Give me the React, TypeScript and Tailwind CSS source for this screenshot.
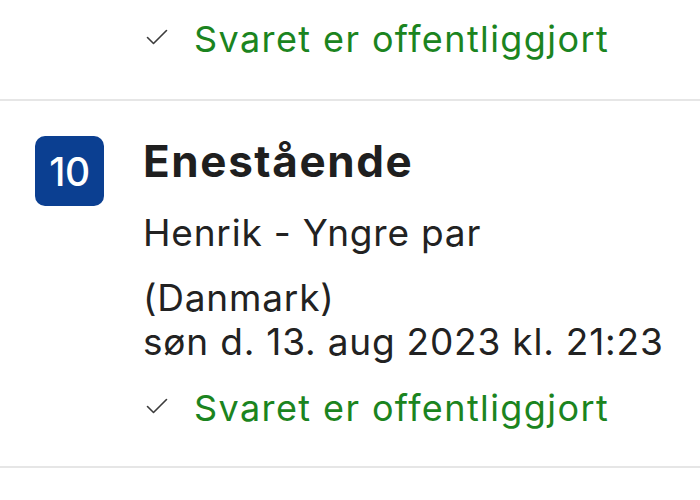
function Published() {
  return (
    <div className="flex items-start">
      <svg width="22" height="16" viewBox="0 0 22 16" fill="none" className="mt-[8px] shrink-0">
        <polyline points="1.5,8.5 7.5,14.5 20.5,1.5" stroke="#3c3c3c" strokeWidth="1.6" strokeLinecap="round" strokeLinejoin="round" />
      </svg>
      <span className="ml-[26px] text-[36px] leading-none text-[#1b8420] tracking-[1.4px] whitespace-nowrap">
        Svaret er offentliggjort
      </span>
    </div>
  );
}

export default function App() {
  return (
    <div className="w-[700px] h-[500px] overflow-hidden bg-white font-['Inter',sans-serif] text-[#222]">
      <div className="pl-[146px] pt-[21px] h-[99px]">
        <Published />
      </div>
      <div className="h-[2px] bg-[#e6e6e6]" />
      <div className="flex pl-[35px] pt-[35px] h-[365px]">
        <div className="w-[69px] h-[70px] rounded-[10px] bg-[#0b3f91] flex items-center justify-center shrink-0">
          <span className="text-white text-[39px] font-medium tracking-[-0.5px] leading-none">10</span>
        </div>
        <div className="ml-[39px] flex flex-col">
          <h2 className="text-[44px] font-bold leading-none mt-[3px] tracking-[1.6px] text-[#1f1f1f]">Enestående</h2>
          <p className="text-[37px] leading-none mt-[31px] tracking-[0.8px]">Henrik - Yngre par</p>
          <p className="text-[37px] leading-none mt-[28px] tracking-[0.8px]">(Danmark)</p>
          <p className="text-[37px] leading-none mt-[7px] tracking-[0.8px] whitespace-nowrap">søn d. 13. aug 2023 kl. 21:23</p>
          <div className="mt-[30px] ml-[3px]">
            <Published />
          </div>
        </div>
      </div>
      <div className="h-[2px] bg-[#e6e6e6]" />
    </div>
  );
}
